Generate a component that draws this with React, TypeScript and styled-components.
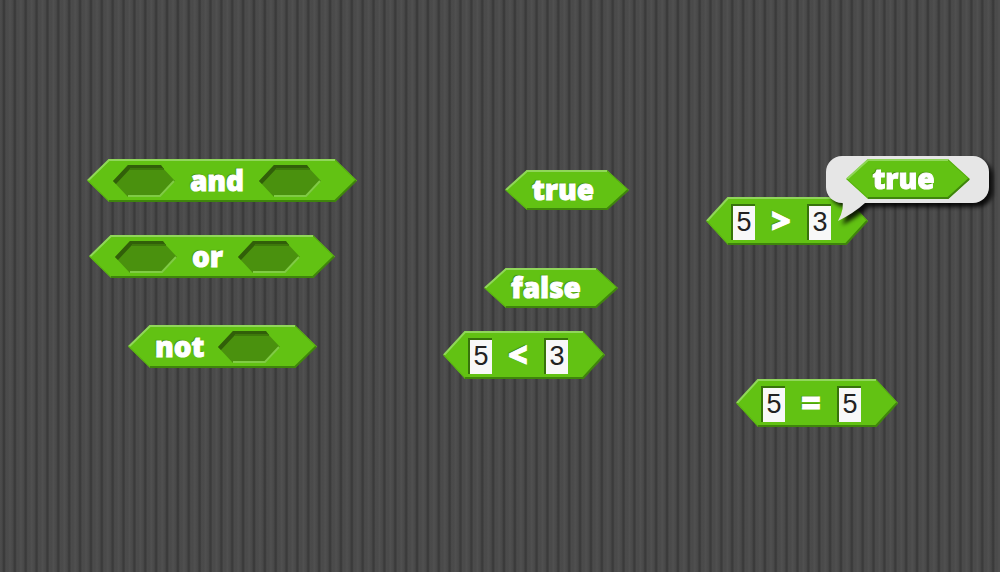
import React from "react";
import styled, { createGlobalStyle } from "styled-components";

const GlobalStyle = createGlobalStyle`
  *, *::before, *::after { box-sizing: border-box; }
  body { margin: 0; background: #4b4b4b; }
`;

const Workspace = styled.main`
  position: relative;
  min-height: 100vh;
  overflow: hidden;
  font-family: "Open Sans", "Noto Sans", sans-serif;
  background: repeating-linear-gradient(
    to right,
    #4d4d4d 0%,
    #484848 0.2%,
    #3b3b3b 0.35%,
    #3b3b3b 0.45%,
    #4b4b4b 0.6%,
    #4a4a4a 0.8%,
    #505050 1%,
    #4d4d4d 1.087%
  );
`;

const Placed = styled.div<{ $x: number; $y: number }>`
  position: absolute;
  left: ${(p) => p.$x}px;
  top: ${(p) => p.$y}px;
`;

const BlockBody = styled.div<{ $w: number; $h: number; $lead: number }>`
  position: relative;
  isolation: isolate;
  display: flex;
  align-items: center;
  width: ${(p) => p.$w}px;
  height: ${(p) => p.$h}px;
  padding-left: ${(p) => p.$lead}px;
`;

const Shape = styled.svg`
  position: absolute;
  inset: 0;
  z-index: -1;
  display: block;
  overflow: visible;
`;

const SlotShape = styled.svg`
  display: block;
  flex: none;
  overflow: visible;
`;

const Label = styled.span<{ $w: number; $align?: "left" | "center" }>`
  width: ${(p) => p.$w}px;
  flex: none;
  padding-bottom: 2px;
  text-align: ${(p) => p.$align ?? "center"};
  white-space: nowrap;
  color: #fff;
  font-size: 28px;
  font-weight: 800;
  line-height: 36px;
  -webkit-text-stroke: 1px #fff;
  text-shadow: -1px -1px 1px #3f850c;
`;

const Sign = styled(Label)`
  font-size: 34px;
`;

const NumberField = styled.input`
  flex: none;
  width: 24px;
  height: 36px;
  margin-top: 2px;
  padding: 0 0 2px;
  border: 0 solid #37730b;
  border-width: 2px 0 0 2px;
  border-radius: 0;
  background: #f8f8f8;
  color: #222;
  font: 27px "Liberation Sans", Arial, sans-serif;
  text-align: center;
  outline: 0;
`;

const Balloon = styled.div`
  position: relative;
  display: flex;
  justify-content: center;
  width: 163px;
  height: 47px;
  padding-top: 3px;
  border-radius: 16px;
  background: #e6e6e6;
  filter: drop-shadow(4px 4px 2px rgba(0, 0, 0, 0.85));
`;

const Tail = styled.svg`
  position: absolute;
  left: 11px;
  top: 44px;
  overflow: visible;
`;

type HexProps = { w: number; h: number };

function hexPoints(w: number, h: number, tip: number) {
  return `0,${h / 2} ${tip},0 ${w - tip},0 ${w},${h / 2} ${w - tip},${h} ${tip},${h}`;
}

function Hexagon({ w, h }: HexProps) {
  const tip = 22;
  const m = h / 2;
  return (
    <Shape width={w} height={h} aria-hidden="true">
      <polygon points={hexPoints(w, h, tip)} fill="#62c213" />
      <path d={`M1 ${m} L${tip} 1 H${w - tip}`} fill="none" stroke="#90d65a" strokeWidth="2" />
      <path d={`M1 ${m} L${tip} ${h - 1}`} fill="none" stroke="#58b010" strokeWidth="1" />
      <path d={`M${w - tip} 1 L${w - 1} ${m}`} fill="none" stroke="#56aa10" strokeWidth="1" />
      <path d={`M${tip} ${h - 1} H${w - tip} L${w - 1} ${m}`} fill="none" stroke="#3f850c" strokeWidth="2" />
    </Shape>
  );
}

function Slot() {
  return (
    <SlotShape width="62" height="32" role="img" aria-label="empty slot">
      <polygon points={hexPoints(62, 32, 15)} fill="#4a910e" />
      <path d="M0 16 L15 0 H48 L51 4 H17 L3 19 Z" fill="#315f09" />
      <path d="M17 4 H51" stroke="#3d780b" strokeWidth="2" />
      <path d="M15 31 H47 L61 16" fill="none" stroke="#80cb45" strokeWidth="2" />
    </SlotShape>
  );
}

type BlockProps = HexProps & { lead: number; children: React.ReactNode };

function Block({ w, h, lead, children }: BlockProps) {
  return (
    <BlockBody $w={w} $h={h} $lead={lead}>
      <Hexagon w={w} h={h} />
      {children}
    </BlockBody>
  );
}

function Comparison({ left, sign, right }: { left: string; sign: string; right: string }) {
  return (
    <Block w={162} h={48} lead={25}>
      <NumberField aria-label="Left value" defaultValue={left} />
      <Sign $w={52}>{sign}</Sign>
      <NumberField aria-label="Right value" defaultValue={right} />
    </Block>
  );
}

export default function App() {
  return (
    <>
      <GlobalStyle />
      <Workspace>
        <Placed $x={87} $y={159}>
          <Block w={270} h={43} lead={26}>
            <Slot />
            <Label $w={84}>and</Label>
            <Slot />
          </Block>
        </Placed>
        <Placed $x={89} $y={235}>
          <Block w={246} h={43} lead={26}>
            <Slot />
            <Label $w={61}>or</Label>
            <Slot />
          </Block>
        </Placed>
        <Placed $x={128} $y={325}>
          <Block w={189} h={43} lead={27}>
            <Label $w={63} $align="left">not</Label>
            <Slot />
          </Block>
        </Placed>
        <Placed $x={505} $y={170}>
          <Block w={124} h={40} lead={20}>
            <Label $w={76}>true</Label>
          </Block>
        </Placed>
        <Placed $x={484} $y={268}>
          <Block w={134} h={40} lead={20}>
            <Label $w={84}>false</Label>
          </Block>
        </Placed>
        <Placed $x={443} $y={331}>
          <Comparison left="5" sign="<" right="3" />
        </Placed>
        <Placed $x={706} $y={197}>
          <Comparison left="5" sign=">" right="3" />
        </Placed>
        <Placed $x={736} $y={379}>
          <Comparison left="5" sign="=" right="5" />
        </Placed>
        <Placed $x={826} $y={156}>
          <Balloon role="status">
            <Block w={124} h={40} lead={20}>
              <Label $w={76}>true</Label>
            </Block>
            <Tail width="30" height="22" aria-hidden="true">
              <path d="M5 0 Q8 8 1 21 Q17 13 28 3 V0 Z" fill="#e6e6e6" />
            </Tail>
          </Balloon>
        </Placed>
      </Workspace>
    </>
  );
}
